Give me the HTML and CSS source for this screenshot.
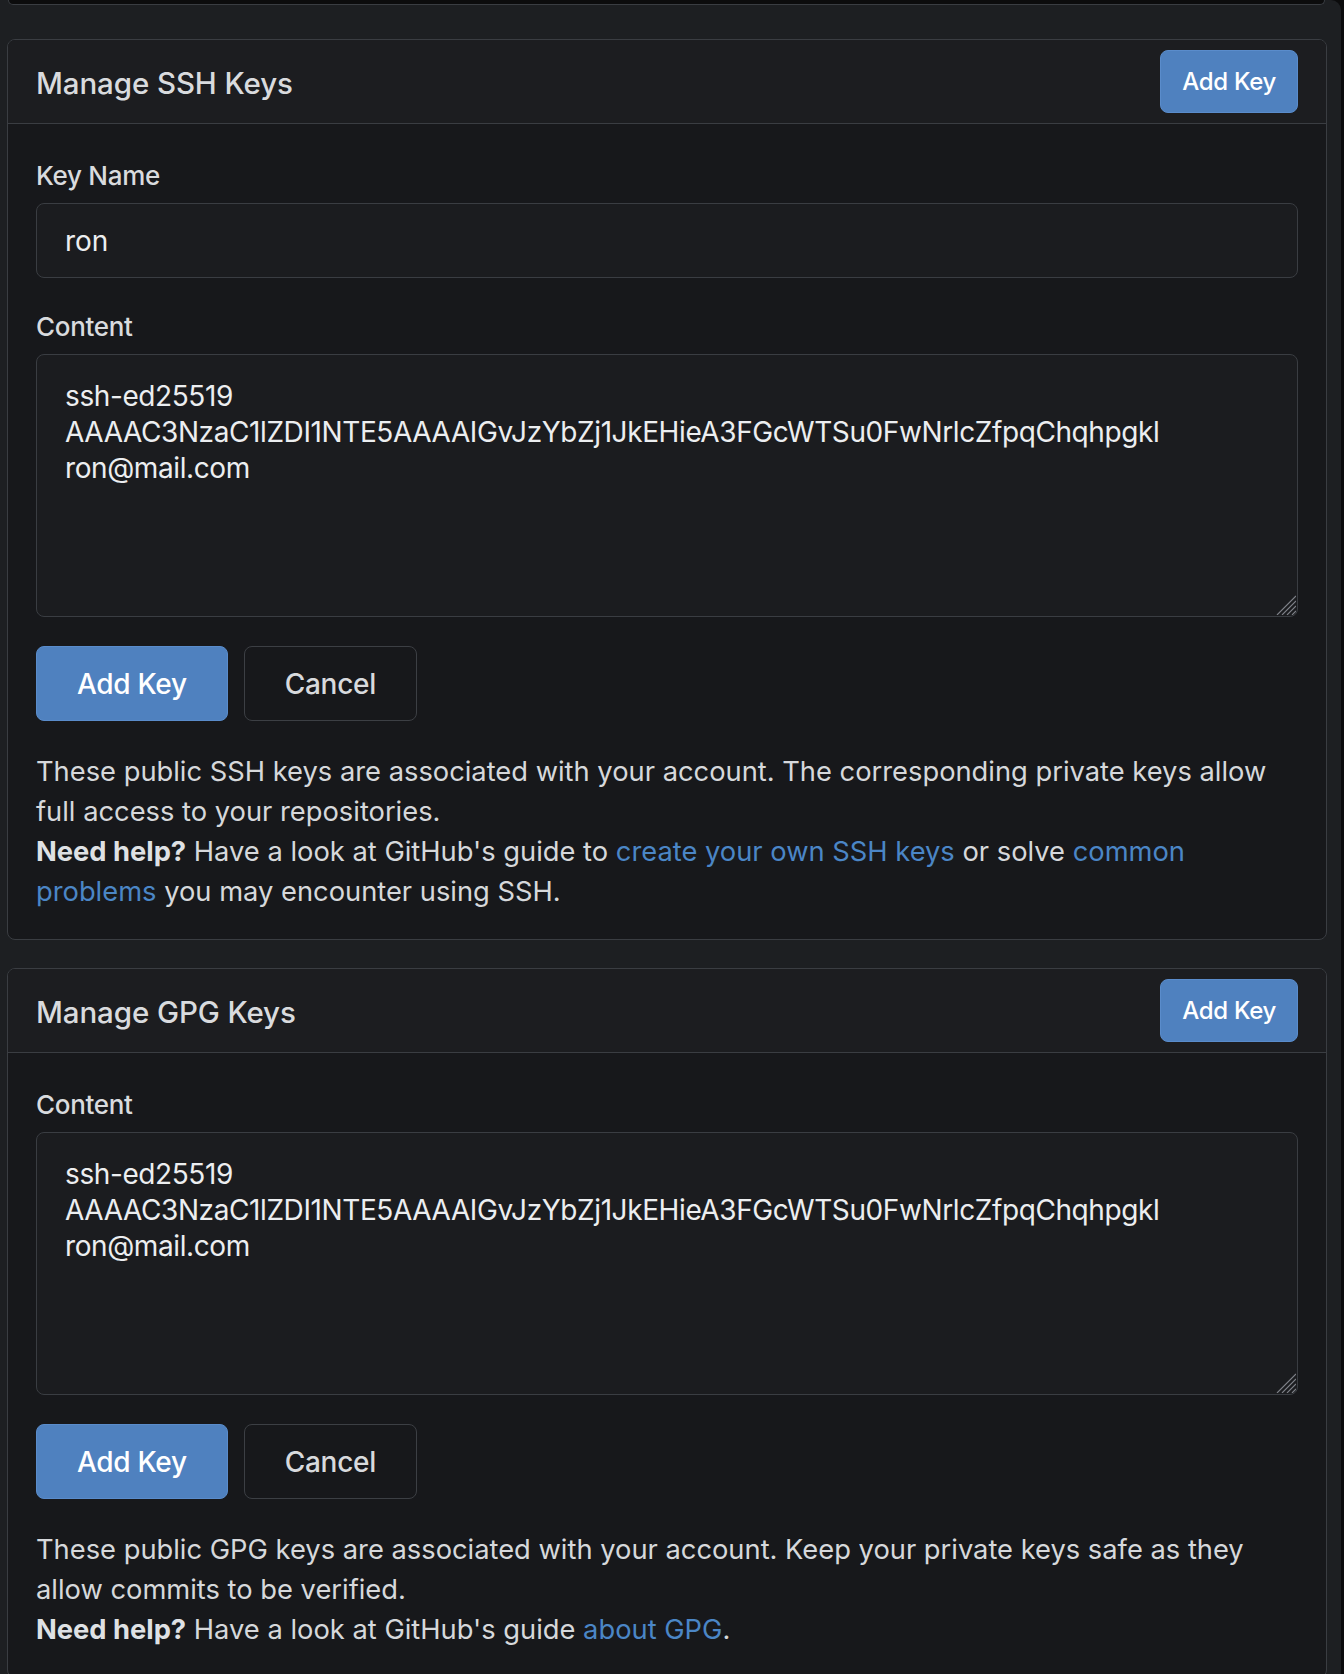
FILE: index.html
```html
<!DOCTYPE html>
<html lang="en">
<head>
<meta charset="utf-8">
<title>SSH / GPG Keys</title>
<link rel="stylesheet" href="styles.css">
</head>
<body>
<div class="page">
  <div class="prev"></div>

  <section class="panel panel-first">
    <header class="panel-head">
      <h4 class="panel-title">Manage SSH Keys</h4>
      <button class="btn btn-primary btn-small" type="button">Add Key</button>
    </header>
    <div class="panel-body">
      <form class="form">
        <div class="field">
          <label class="field-label" for="ssh-title">Key Name</label>
          <input class="input" id="ssh-title" type="text" value="ron">
        </div>
        <div class="field">
          <label class="field-label" for="ssh-content">Content</label>
          <div class="textarea-wrap">
            <textarea class="textarea" id="ssh-content">ssh-ed25519
AAAAC3NzaC1lZDI1NTE5AAAAIGvJzYbZj1JkEHieA3FGcWTSu0FwNrlcZfpqChqhpgkl
ron@mail.com</textarea>
            <svg class="grip" width="20" height="20" viewBox="0 0 20 20" aria-hidden="true">
              <path d="M1 20 L20 1 M6 20 L20 6 M11 20 L20 11 M16 20 L20 16" stroke="#80838a" stroke-width="1.1" fill="none"/>
            </svg>
          </div>
        </div>
        <div class="actions">
          <button class="btn btn-primary btn-large" type="button">Add Key</button>
          <button class="btn btn-basic btn-large" type="button">Cancel</button>
        </div>
      </form>
      <div class="help">
        These public SSH keys are associated with your account. The corresponding private keys allow full access to your repositories.<br>
        <strong>Need help?</strong> Have a look at GitHub's guide to <a href="#">create your own SSH keys</a> or solve <a href="#">common problems</a> you may encounter using SSH.
      </div>
    </div>
  </section>

  <section class="panel">
    <header class="panel-head">
      <h4 class="panel-title">Manage GPG Keys</h4>
      <button class="btn btn-primary btn-small" type="button">Add Key</button>
    </header>
    <div class="panel-body">
      <form class="form">
        <div class="field">
          <label class="field-label" for="gpg-content">Content</label>
          <div class="textarea-wrap">
            <textarea class="textarea" id="gpg-content">ssh-ed25519
AAAAC3NzaC1lZDI1NTE5AAAAIGvJzYbZj1JkEHieA3FGcWTSu0FwNrlcZfpqChqhpgkl
ron@mail.com</textarea>
            <svg class="grip" width="20" height="20" viewBox="0 0 20 20" aria-hidden="true">
              <path d="M1 20 L20 1 M6 20 L20 6 M11 20 L20 11 M16 20 L20 16" stroke="#80838a" stroke-width="1.1" fill="none"/>
            </svg>
          </div>
        </div>
        <div class="actions">
          <button class="btn btn-primary btn-large" type="button">Add Key</button>
          <button class="btn btn-basic btn-large" type="button">Cancel</button>
        </div>
      </form>
      <div class="help">
        These public GPG keys are associated with your account. Keep your private keys safe as they allow commits to be verified.<br>
        <strong>Need help?</strong> Have a look at GitHub's guide <a href="#">about GPG</a>.
      </div>
    </div>
  </section>
</div>
</body>
</html>
```
FILE: styles.css
```css
html, body {
  margin: 0;
  padding: 0;
}

body {
  background: #0b0b0c;
  color: #dadcdf;
  font-family: Inter, "Noto Sans", sans-serif;
  font-size: 28px;
  line-height: 40px;
}

.page {
  margin: 4px 3px 0 0;
  padding: 0 14px 0 7px;
  background: #1d1f22;
  border-top-right-radius: 10px;
  min-height: 1670px;
}

.prev {
  margin: -4px 2px 0 1px;
  height: 4px;
  background: #0c0c0d;
  border: 1px solid #3a3d42;
  border-top: none;
  border-radius: 0 0 8px 8px;
}

.panel {
  background: #17181b;
  border: 1px solid #3a3d42;
  border-radius: 8px;
  overflow: hidden;
  margin-top: 28px;
}

.panel-first {
  margin-top: 34px;
}

.panel-head {
  display: flex;
  align-items: center;
  justify-content: space-between;
  padding: 10px 28px;
  background: #1c1d20;
  border-bottom: 1px solid #3a3d42;
}

.panel-title {
  margin: 0;
  font-size: 29.5px;
  font-weight: 500;
  letter-spacing: -0.1px;
  color: #d9dbde;
  padding-top: 2px;
}

.panel-body {
  padding: 32px 28px 27px;
}

.form {
  margin: 0;
}

.field {
  margin-bottom: 29px;
}

.field-label {
  display: block;
  font-size: 26px;
  font-weight: 500;
  line-height: 40px;
  letter-spacing: -0.3px;
  margin-bottom: 7px;
  color: #d9dbde;
}

.input,
.textarea {
  display: block;
  box-sizing: border-box;
  width: 100%;
  margin: 0;
  background: #1b1c1f;
  border: 1px solid #3a3d42;
  border-radius: 8px;
  color: #eceef0;
  font-family: Inter, "Noto Sans", sans-serif;
  font-size: 28px;
  outline: none;
}

.input {
  height: 75px;
  padding: 0 28px;
  line-height: 34px;
}

.textarea-wrap {
  position: relative;
}

.textarea {
  height: 263px;
  padding: 23px 28px;
  line-height: 36px;
  letter-spacing: -0.4px;
  resize: none;
}

.grip {
  position: absolute;
  right: 2px;
  bottom: 2px;
  pointer-events: none;
}

.actions {
  display: flex;
  gap: 16px;
}

.btn {
  box-sizing: border-box;
  display: inline-flex;
  align-items: center;
  justify-content: center;
  margin: 0;
  border-radius: 8px;
  font-family: Inter, "Noto Sans", sans-serif;
  font-weight: 500;
  letter-spacing: -0.3px;
  cursor: pointer;
}

.btn-primary {
  background: #4f81bf;
  border: 1px solid #5a8ccb;
  color: #ffffff;
}

.btn-basic {
  background: transparent;
  border: 1px solid #3c3f44;
  color: #d8dadd;
}

.btn-small {
  height: 63px;
  padding: 0 21px;
  font-size: 24px;
}

.btn-large {
  height: 75px;
  padding: 0 40px;
  font-size: 28px;
}

.help {
  margin-top: 31px;
  font-size: 27.3px;
  color: #d6d8db;
}

.help strong {
  font-weight: 700;
  color: #dfe1e4;
}

.help a {
  color: #4b86c6;
  text-decoration: none;
}
```
